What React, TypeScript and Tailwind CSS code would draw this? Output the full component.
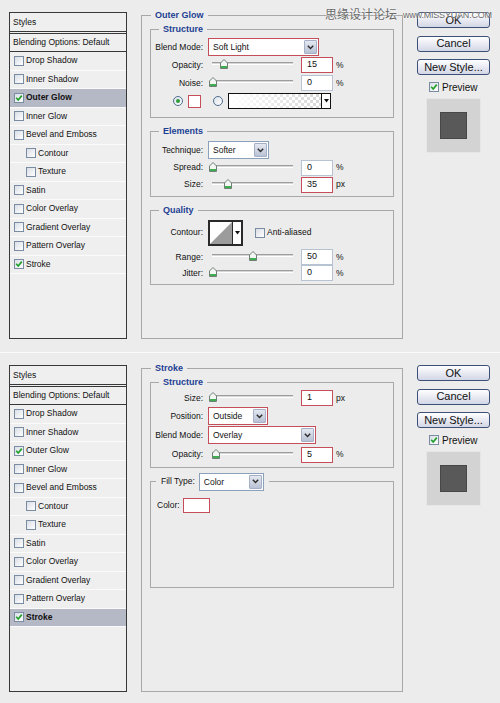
import React from "react";

type StyleItem = { name: string; sub?: boolean; checked?: boolean };

const STYLE_ITEMS: StyleItem[] = [
  { name: "Drop Shadow" },
  { name: "Inner Shadow" },
  { name: "Outer Glow", checked: true },
  { name: "Inner Glow" },
  { name: "Bevel and Emboss" },
  { name: "Contour", sub: true },
  { name: "Texture", sub: true },
  { name: "Satin" },
  { name: "Color Overlay" },
  { name: "Gradient Overlay" },
  { name: "Pattern Overlay" },
  { name: "Stroke", checked: true },
];

function Check({ checked }: { checked?: boolean }) {
  return (
    <span className="flex h-[10px] w-[10px] shrink-0 items-center justify-center border border-[#7a8ca2] bg-linear-to-br from-[#d9dee6] to-white">
      {checked && (
        <svg width="8" height="8" viewBox="0 0 8 8">
          <path d="M1.2 3.8 L3.2 6 L6.8 1.6" stroke="#22a02c" strokeWidth="1.7" fill="none" />
        </svg>
      )}
    </span>
  );
}

function Radio({ on }: { on?: boolean }) {
  return (
    <span className="flex h-[10px] w-[10px] shrink-0 items-center justify-center rounded-full border border-[#4f6e8e] bg-linear-to-br from-[#dde2ea] to-white">
      {on && <span className="h-[4px] w-[4px] rounded-full bg-[#2f9a3b]" />}
    </span>
  );
}

function StylesPanel({ active }: { active: string }) {
  return (
    <div className="mt-[12px] flex h-[327px] w-[118px] shrink-0 flex-col border border-[#383838] bg-[#efefef] text-[8.5px] text-[#111]">
      <div className="flex h-[21px] items-center border-b-[3px] border-double border-[#383838] pl-[3px]">Styles</div>
      <div className="flex h-[18px] items-center border-b border-[#383838] pl-[3px]">Blending Options: Default</div>
      {STYLE_ITEMS.map((s) => (
        <div
          key={s.name}
          className={`flex h-[18.5px] shrink-0 items-center gap-[2px] border-b border-[#fbfbfb] ${s.sub ? "pl-[16px]" : "pl-[4px]"} ${s.name === active ? "bg-[#b5b8c5] font-bold" : ""}`}
        >
          <Check checked={s.checked} />
          <span>{s.name}</span>
        </div>
      ))}
    </div>
  );
}

function Legend({ children, className }: { children: React.ReactNode; className: string }) {
  return (
    <legend className={`px-[4px] text-[9px] leading-[11px] font-bold text-[#1d3f93] ${className}`}>{children}</legend>
  );
}

function Arrow() {
  return (
    <span className="flex w-[13px] shrink-0 items-center justify-center rounded-[1px] border border-[#a5b0c6] bg-linear-to-b from-[#e4e8f0] to-[#b9c2d5]">
      <svg width="7" height="5" viewBox="0 0 7 5">
        <path d="M0.8 0.8 L3.5 3.6 L6.2 0.8" stroke="#2b2b2b" strokeWidth="1.4" fill="none" />
      </svg>
    </span>
  );
}

function Select({ value, className, red }: { value: string; className: string; red?: boolean }) {
  return (
    <div className={`flex h-[18px] shrink-0 border bg-white p-[1px] ${red ? "border-[#c44f5a]" : "border-[#8aa0bb]"} ${className}`}>
      <span className="flex flex-1 items-center pl-[3px] pt-[1px]">{value}</span>
      <Arrow />
    </div>
  );
}

function Row({ label, className, children }: { label: string; className: string; children: React.ReactNode }) {
  return (
    <div className={`flex items-center ${className}`}>
      <span className="w-[52px] shrink-0 text-right">{label}</span>
      {children}
    </div>
  );
}

function Thumb({ className }: { className: string }) {
  return (
    <svg className={`absolute top-[-3px] ${className}`} width="8" height="10" viewBox="0 0 8 10">
      <path d="M0.5 4 L4 0.5 L7.5 4 V9.5 H0.5 Z" fill="#f4f6f4" stroke="#6f7f74" strokeWidth="1" />
      <rect x="1" y="7" width="6" height="2" fill="#3fae52" />
    </svg>
  );
}

function SliderRow({
  label,
  value,
  unit,
  thumb,
  red,
  className,
}: {
  label: string;
  value: string;
  unit: string;
  thumb: string;
  red?: boolean;
  className: string;
}) {
  return (
    <Row label={label} className={className}>
      <div className="relative ml-[5px] h-[6px] w-[93px] shrink-0">
        <div className="ml-[4px] h-[3px] w-[81px] border-t border-b border-t-[#9d9d9d] border-b-white bg-[#d6d6d6]" />
        <Thumb className={thumb} />
      </div>
      <div className={`flex h-[16px] w-[32px] shrink-0 items-center border bg-white pl-[5px] text-[9px] ${red ? "border-[#c44f5a]" : "border-[#b7c3d2]"}`}>
        {value}
      </div>
      <span className="ml-[3px]">{unit}</span>
    </Row>
  );
}

function Buttons() {
  return (
    <div className="ml-[14px] mt-[12px] flex w-[73px] shrink-0 flex-col font-['Liberation_Sans',Arial,sans-serif] text-[11px]">
      {["OK", "Cancel", "New Style..."].map((b, i) => (
        <div
          key={b}
          className={`flex h-[16px] items-center justify-center rounded-[3px] border border-[#3d5078] bg-linear-to-b from-white to-[#d3d6e6] leading-none ${i > 0 ? "mt-[7.5px]" : ""}`}
        >
          {b}
        </div>
      ))}
      <div className="mt-[6px] flex h-[12px] items-center gap-[3px] pl-[12px] text-[10px]">
        <Check checked />
        <span>Preview</span>
      </div>
      <div className="ml-[9px] mt-[5px] flex h-[55px] w-[55px] items-center justify-center border border-[#e6e6e6] bg-[#d3d3d3]">
        <div className="h-[27px] w-[27px] border border-[#474747] bg-[#595959]" />
      </div>
    </div>
  );
}

function OuterGlow() {
  return (
    <fieldset className="ml-[14px] mt-[10px] h-[329px] w-[262px] shrink-0 border border-[#a8a8a8] px-[8px] pt-[2.5px]">
      <Legend className="ml-[1px]">Outer Glow</Legend>
      <fieldset className="border border-[#a8a8a8] pb-[7px]">
        <Legend className="ml-[8px]">Structure</Legend>
        <Row label="Blend Mode:" className="mt-[3.5px] h-[18px]">
          <Select value="Soft Light" red className="ml-[5px] w-[111px]" />
        </Row>
        <SliderRow label="Opacity:" value="15" unit="%" thumb="left-[12px]" red className="h-[18px]" />
        <SliderRow label="Noise:" value="0" unit="%" thumb="left-[1px]" className="h-[18px]" />
        <div className="flex h-[18px] items-center">
          <span className="ml-[22px]">
            <Radio on />
          </span>
          <span className="ml-[5px] h-[13px] w-[13px] border border-[#c44f5a] bg-white" />
          <span className="ml-[12px]">
            <Radio />
          </span>
          <div className="ml-[5px] flex h-[16px] w-[103px] border border-[#111] bg-[image:repeating-conic-gradient(#d6d6d6_0%_25%,#ffffff_0%_50%)] bg-size-[6px_6px]">
            <div className="flex-1 bg-linear-to-r from-white to-transparent" />
            <span className="flex w-[9px] items-center justify-center border-l border-[#111] bg-white">
              <svg width="5" height="4" viewBox="0 0 5 4">
                <path d="M0 0 H5 L2.5 3.5 Z" fill="#111" />
              </svg>
            </span>
          </div>
        </div>
      </fieldset>
      <fieldset className="mt-[7.5px] border border-[#a8a8a8] pb-[3px]">
        <Legend className="ml-[8px]">Elements</Legend>
        <Row label="Technique:" className="mt-[4.5px] h-[18px]">
          <Select value="Softer" className="ml-[5px] w-[61px]" />
        </Row>
        <SliderRow label="Spread:" value="0" unit="%" thumb="left-[1px]" className="h-[17px]" />
        <SliderRow label="Size:" value="35" unit="px" thumb="left-[16px]" red className="h-[17px]" />
      </fieldset>
      <fieldset className="mt-[7.5px] border border-[#a8a8a8] pb-[3px]">
        <Legend className="ml-[8px]">Quality</Legend>
        <Row label="Contour:" className="mt-[4.5px] h-[25px]">
          <div className="ml-[5px] flex h-[26px] w-[35px] border-2 border-[#2a2a2a] bg-white">
            <svg className="flex-1" viewBox="0 0 24 22" preserveAspectRatio="none">
              <path d="M0 22 L24 0 V22 Z" fill="#9c9c9c" />
            </svg>
            <span className="flex w-[9px] items-center justify-center border-l border-[#2a2a2a]">
              <svg width="5" height="4" viewBox="0 0 5 4">
                <path d="M0 0 H5 L2.5 3.5 Z" fill="#111" />
              </svg>
            </span>
          </div>
          <span className="ml-[12px]">
            <Check />
          </span>
          <span className="ml-[2px]">Anti-aliased</span>
        </Row>
        <SliderRow label="Range:" value="50" unit="%" thumb="left-[41px]" className="mt-[3.5px] h-[17px]" />
        <SliderRow label="Jitter:" value="0" unit="%" thumb="left-[1px]" className="h-[15px]" />
      </fieldset>
    </fieldset>
  );
}

function Stroke() {
  return (
    <fieldset className="ml-[14px] mt-[10px] h-[329px] w-[262px] shrink-0 border border-[#a8a8a8] px-[8px] pt-[2.5px]">
      <Legend className="ml-[1px]">Stroke</Legend>
      <fieldset className="border border-[#a8a8a8] pb-[2px]">
        <Legend className="ml-[8px]">Structure</Legend>
        <SliderRow label="Size:" value="1" unit="px" thumb="left-[1px]" red className="mt-[2px] h-[17px]" />
        <Row label="Position:" className="h-[19px]">
          <Select value="Outside" red className="ml-[5px] w-[60px]" />
        </Row>
        <Row label="Blend Mode:" className="h-[19px]">
          <Select value="Overlay" red className="ml-[5px] w-[108px]" />
        </Row>
        <SliderRow label="Opacity:" value="5" unit="%" thumb="left-[4px]" red className="h-[20px]" />
      </fieldset>
      <fieldset className="mt-[5px] h-[115px] border border-[#a8a8a8]">
        <legend className="ml-[5px] flex items-center px-[5px] text-[8.5px]">
          <span>Fill Type:</span>
          <Select value="Color" className="ml-[4px] w-[65px]" />
        </legend>
        <div className="mt-[7px] flex h-[16px] items-center pl-[6px]">
          <span>Color:</span>
          <span className="ml-[3px] h-[15px] w-[27px] border border-[#c44f5a] bg-white" />
        </div>
      </fieldset>
    </fieldset>
  );
}

function Dialog({ kind, className }: { kind: "glow" | "stroke"; className: string }) {
  return (
    <div className={`flex h-[353px] pl-[9px] ${className}`}>
      <StylesPanel active={kind === "glow" ? "Outer Glow" : "Stroke"} />
      {kind === "glow" ? <OuterGlow /> : <Stroke />}
      <Buttons />
    </div>
  );
}

export default function App() {
  return (
    <div className="relative h-[703px] w-[500px] overflow-hidden bg-[#ececec] font-['Liberation_Sans',Arial,sans-serif] text-[8.5px] text-[#111]">
      <Dialog kind="glow" className="border-b border-[#fafafa]" />
      <Dialog kind="stroke" className="" />
      <div className="absolute left-[325px] top-[6px] flex items-end gap-[6px] text-[#6a6a6a] [text-shadow:0_0_2px_#fff]">
        <span className="font-['Noto_Sans_CJK_SC',sans-serif] text-[12px] leading-[16px]">思缘设计论坛</span>
        <span className="pb-[1px] text-[9px] leading-[12px] tracking-[-0.2px]">www.MISSYUAN.COM</span>
      </div>
    </div>
  );
}
